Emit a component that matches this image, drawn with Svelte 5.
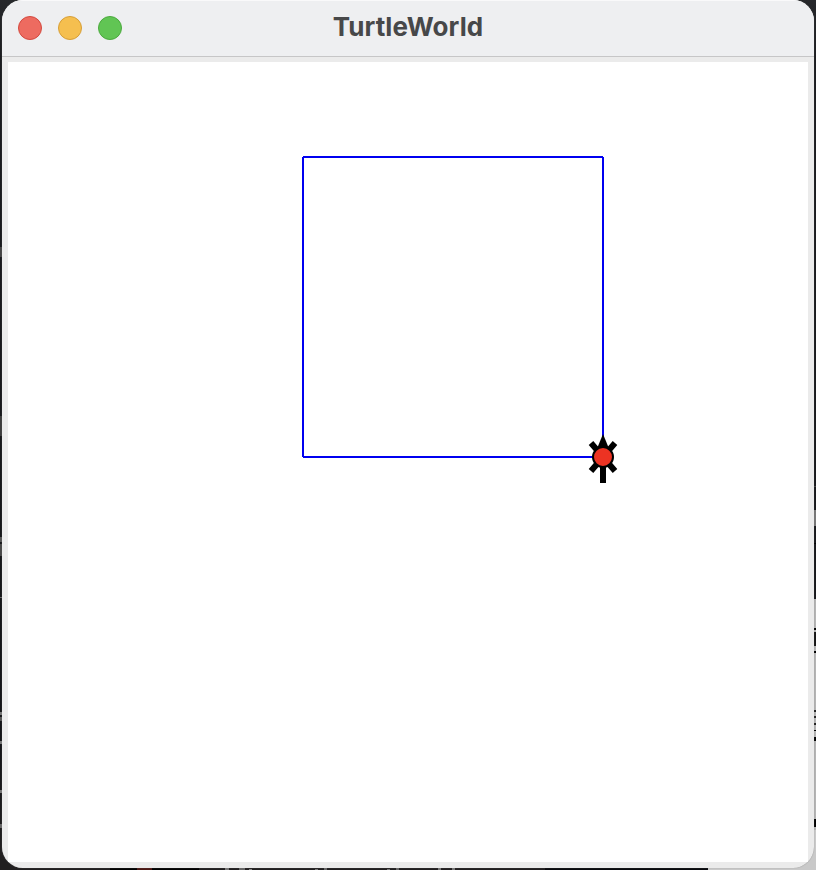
<script>
  const controls = [
    { name: 'close', fill: '#ed6b60', edge: '#d3493f' },
    { name: 'minimize', fill: '#f5bf4f', edge: '#d69e38' },
    { name: 'zoom', fill: '#61c554', edge: '#4ba93e' }
  ];

  // Fragments of the desktop that show around the window: x, y, width, height, colour
  const backdrop = [
    [708, 867, 108, 3, '#c9c9c9'],
    [110, 868, 89, 2, '#000000'],
    [137, 868, 15, 2, '#4b1713'],
    [225, 868, 4, 2, '#777777'],
    [239, 868, 6, 2, '#666666'],
    [249, 869, 3, 1, '#888888'],
    [315, 869, 3, 1, '#777777'],
    [324, 868, 3, 2, '#666666'],
    [387, 869, 3, 1, '#777777'],
    [396, 868, 3, 2, '#666666'],
    [438, 868, 3, 2, '#777777'],
    [452, 868, 3, 2, '#777777'],
    [545, 868, 163, 2, '#08090d'],
    [0, 247, 2, 10, '#444444'],
    [0, 416, 2, 20, '#3d3d3d'],
    [0, 537, 2, 5, '#555555'],
    [0, 544, 2, 12, '#484848'],
    [0, 597, 2, 1, '#666666'],
    [0, 712, 2, 3, '#777777'],
    [0, 717, 2, 4, '#555555'],
    [0, 741, 2, 3, '#777777'],
    [0, 790, 2, 3, '#777777'],
    [0, 824, 2, 4, '#666666'],
    [814, 486, 2, 1, '#444444'],
    [814, 510, 2, 16, '#777777'],
    [814, 543, 2, 1, '#000000'],
    [814, 599, 2, 271, '#b4b4b4'],
    [814, 628, 2, 2, '#000000'],
    [814, 632, 2, 14, '#151515'],
    [814, 651, 2, 2, '#000000'],
    [814, 710, 2, 2, '#222222'],
    [814, 716, 2, 2, '#222222'],
    [814, 723, 2, 2, '#222222'],
    [814, 730, 2, 1, '#000000'],
    [814, 737, 2, 4, '#000000']
  ];
</script>

<main class="desktop">
  <svg class="backdrop" width="816" height="870" aria-hidden="true" shape-rendering="crispEdges">
    {#each backdrop as [x, y, width, height, fill]}
      <rect {x} {y} {width} {height} {fill} />
    {/each}
    <path d="M790 870H816V830H814Q814 864 790 868Z" fill="#c9c9c9" />
    <rect x="814" y="819" width="2" height="8" fill="#000" />
  </svg>

  <section class="window">
    <header class="titlebar">
      <div class="controls">
        {#each controls as control}
          <button
            class="control"
            aria-label={control.name}
            style="background: {control.fill}; border-color: {control.edge}"
          ></button>
        {/each}
      </div>
      <h1>TurtleWorld</h1>
    </header>

    <div class="frame">
      <svg class="canvas" width="800" height="800" viewBox="0 0 800 800">
        <g stroke="#0000f0" stroke-width="2">
          <path d="M595 395V95M595 95H295M295 95V395M295 395H595" fill="none" />
        </g>
        <g stroke="#000" stroke-width="6">
          <path d="M595 395V421M583 381L607 409M607 381L583 409" />
        </g>
        <path d="M595 372L602 389H588Z" fill="#000" />
        <circle cx="595" cy="395" r="10" fill="#ec3323" stroke="#000" stroke-width="2" />
      </svg>
    </div>
  </section>
</main>

<style>
  .desktop {
    position: relative;
    box-sizing: border-box;
    width: 816px;
    height: 870px;
    padding: 0 2px 2px;
    overflow: hidden;
    background: linear-gradient(#26282b 0, #1b1c1f 60px, #141518 750px, #211f20 850px);
  }

  .backdrop {
    position: absolute;
    inset: 0;
  }

  .window {
    position: relative;
    display: flex;
    flex-direction: column;
    width: 812px;
    height: 868px;
    border-radius: 21px;
    overflow: hidden;
    background: #ebebeb;
    box-shadow: 0 0 1px #777;
  }

  .titlebar {
    display: grid;
    grid-template-columns: 1fr auto 1fr;
    align-items: center;
    box-sizing: border-box;
    height: 57px;
    padding-bottom: 1px;
    border-top: 1px solid #f9f9fa;
    border-bottom: 1px solid #c6c6c7;
    background: #eeeff1;
  }

  .controls {
    display: flex;
    gap: 16px;
    padding-left: 16px;
  }

  .control {
    box-sizing: border-box;
    width: 24px;
    height: 24px;
    padding: 0;
    border: 1px solid;
    border-radius: 50%;
  }

  h1 {
    margin: 0;
    padding-bottom: 3px;
    color: #474849;
    font: 700 26px/32px Inter, 'Liberation Sans', sans-serif;
    letter-spacing: 0.1px;
  }

  .frame {
    padding: 5px 6px 6px;
  }

  .canvas {
    display: block;
    background: #fff;
  }
</style>
